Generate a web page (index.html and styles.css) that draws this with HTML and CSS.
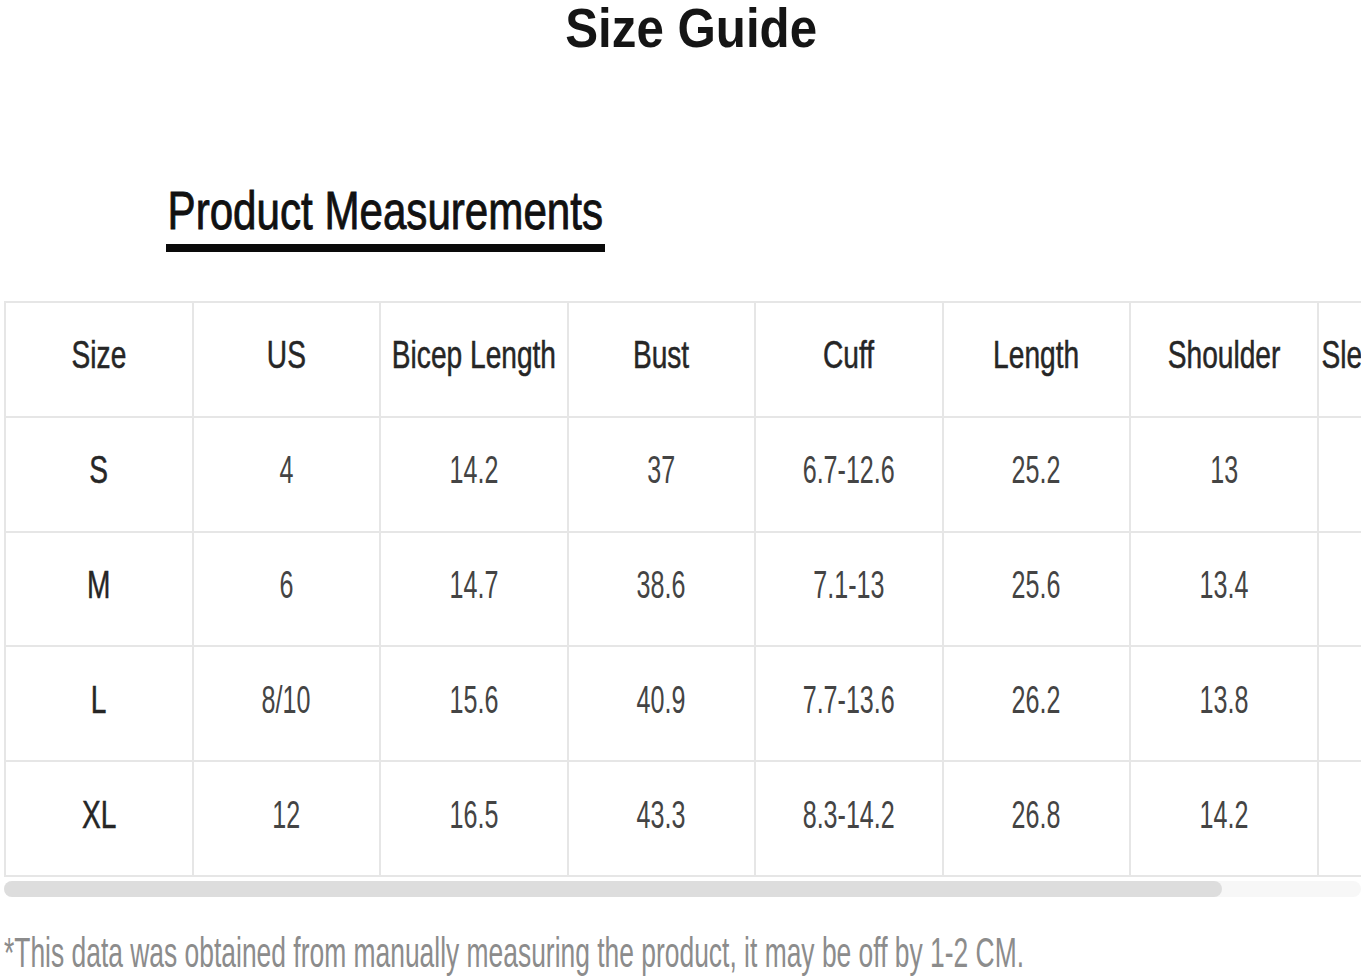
FILE: index.html
```html
<!DOCTYPE html>
<html lang="en">
<head>
<meta charset="utf-8">
<title>Size Guide</title>
<link rel="stylesheet" href="styles.css">
</head>
<body>
<div class="page">
  <header class="guide-head">
    <h1 class="guide-title"><span class="squeeze-title">Size Guide</span></h1>
  </header>

  <section class="measure">
    <h2 class="measure-title"><span class="squeeze-sub">Product Measurements</span></h2>

    <div class="table-scroll">
      <div class="size-table">
        <div class="cell head"><span class="sq-h">Size</span></div>
        <div class="cell head"><span class="sq-h">US</span></div>
        <div class="cell head"><span class="sq-h">Bicep Length</span></div>
        <div class="cell head"><span class="sq-h">Bust</span></div>
        <div class="cell head"><span class="sq-h">Cuff</span></div>
        <div class="cell head"><span class="sq-h">Length</span></div>
        <div class="cell head"><span class="sq-h">Shoulder</span></div>
        <div class="cell head"><span class="sq-h">Sleeve Length</span></div>

        <div class="cell size"><span class="sq-h">S</span></div>
        <div class="cell"><span class="sq-b">4</span></div>
        <div class="cell"><span class="sq-b">14.2</span></div>
        <div class="cell"><span class="sq-b">37</span></div>
        <div class="cell"><span class="sq-b">6.7-12.6</span></div>
        <div class="cell"><span class="sq-b">25.2</span></div>
        <div class="cell"><span class="sq-b">13</span></div>
        <div class="cell"><span class="sq-b"></span></div>

        <div class="cell size"><span class="sq-h">M</span></div>
        <div class="cell"><span class="sq-b">6</span></div>
        <div class="cell"><span class="sq-b">14.7</span></div>
        <div class="cell"><span class="sq-b">38.6</span></div>
        <div class="cell"><span class="sq-b">7.1-13</span></div>
        <div class="cell"><span class="sq-b">25.6</span></div>
        <div class="cell"><span class="sq-b">13.4</span></div>
        <div class="cell"><span class="sq-b"></span></div>

        <div class="cell size"><span class="sq-h">L</span></div>
        <div class="cell"><span class="sq-b">8/10</span></div>
        <div class="cell"><span class="sq-b">15.6</span></div>
        <div class="cell"><span class="sq-b">40.9</span></div>
        <div class="cell"><span class="sq-b">7.7-13.6</span></div>
        <div class="cell"><span class="sq-b">26.2</span></div>
        <div class="cell"><span class="sq-b">13.8</span></div>
        <div class="cell"><span class="sq-b"></span></div>

        <div class="cell size"><span class="sq-h">XL</span></div>
        <div class="cell"><span class="sq-b">12</span></div>
        <div class="cell"><span class="sq-b">16.5</span></div>
        <div class="cell"><span class="sq-b">43.3</span></div>
        <div class="cell"><span class="sq-b">8.3-14.2</span></div>
        <div class="cell"><span class="sq-b">26.8</span></div>
        <div class="cell"><span class="sq-b">14.2</span></div>
        <div class="cell"><span class="sq-b"></span></div>
      </div>
    </div>

    <div class="scrollbar"><div class="scroll-thumb"></div></div>

    <p class="note"><span class="squeeze-note">*This data was obtained from manually measuring the product, it may be off by 1-2 CM.</span></p>
  </section>
</div>
</body>
</html>
```

FILE: styles.css
```css
* { box-sizing: border-box; }

html, body {
  margin: 0;
  padding: 0;
  background: #ffffff;
}

body {
  font-family: "Liberation Sans", Arial, sans-serif;
  color: #222;
  width: 1365px;
  height: 977px;
  overflow: hidden;
}

.page {
  display: flex;
  flex-direction: column;
}

.guide-head {
  display: flex;
  justify-content: center;
  padding-left: 18px;
  height: 70px;
}

.guide-title {
  margin: 0;
  font-size: 56px;
  font-weight: 700;
  line-height: 56px;
  color: #151515;
  padding-top: 0;
}

.squeeze-title {
  display: inline-block;
  transform: scaleX(0.88);
}

.measure {
  display: flex;
  flex-direction: column;
  padding-left: 4px;
}

.measure-title {
  margin: 110px 0 0 162px;
  align-self: flex-start;
  font-size: 54px;
  font-weight: 400;
  line-height: 60px;
  color: #111;
  -webkit-text-stroke: 0.9px #111;
  width: 439px;
  border-bottom: 8px solid #0a0a0a;
  padding-bottom: 4px;
  white-space: nowrap;
}

.squeeze-sub {
  display: inline-block;
  transform-origin: left center;
  transform: scaleX(0.78);
  padding-left: 2px;
}

.table-scroll {
  margin-top: 49px;
  width: 1357px;
  overflow: hidden;
}

.size-table {
  display: grid;
  grid-template-columns: repeat(8, 187.5px);
  grid-auto-rows: 114.8px;
  width: 1500px;
  border-top: 2px solid #e6e6e6;
  border-left: 2px solid #e6e6e6;
}

.cell {
  display: flex;
  align-items: center;
  justify-content: center;
  padding-bottom: 7px;
  border-right: 2px solid #e6e6e6;
  border-bottom: 2px solid #e6e6e6;
  font-size: 38px;
  color: #444;
  white-space: nowrap;
}

.sq-h {
  display: inline-block;
  transform: scaleX(0.74);
  color: #262626;
  -webkit-text-stroke: 0.5px #262626;
}

.sq-b {
  display: inline-block;
  transform: scaleX(0.66);
  color: #444;
}

.scrollbar {
  margin-top: 4px;
  width: 1357px;
  height: 16px;
  background: #f7f7f7;
  border-radius: 8px;
  display: flex;
}

.scroll-thumb {
  width: 1218px;
  height: 16px;
  background: #dddddd;
  border-radius: 8px;
}

.note {
  margin: 34px 0 0 0;
  font-size: 42px;
  line-height: 44px;
  color: #8c8c8c;
  white-space: nowrap;
}

.squeeze-note {
  display: inline-block;
  transform-origin: left center;
  transform: scaleX(0.629);
}
```
